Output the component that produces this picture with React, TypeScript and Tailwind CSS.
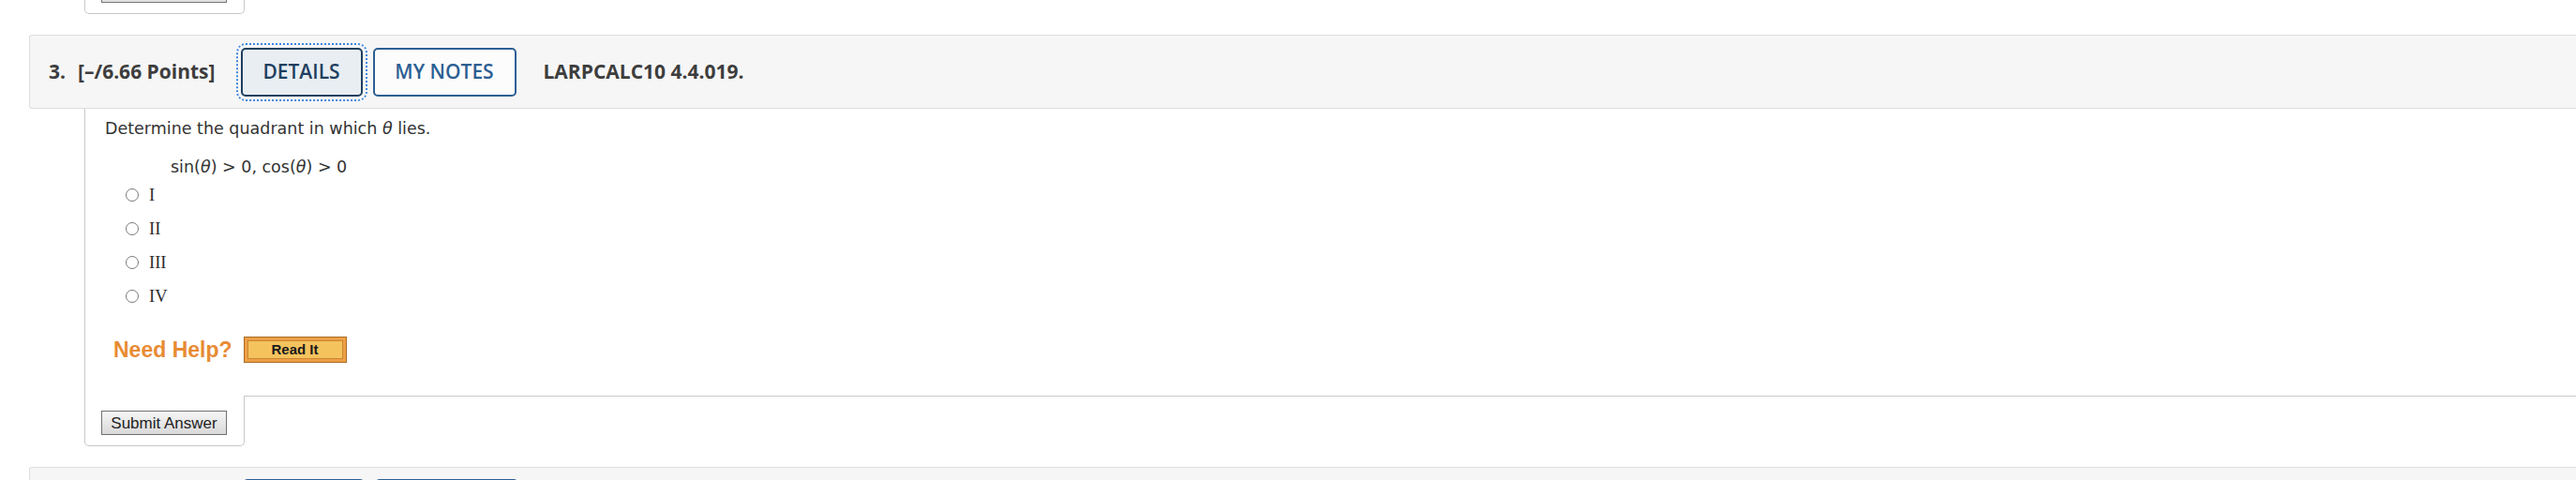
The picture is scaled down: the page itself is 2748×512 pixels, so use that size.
export default function App() {
  const choices = ['I', 'II', 'III', 'IV']

  return (
    <div className="w-full h-[512px] overflow-hidden bg-white flex flex-col">
      {/* previous question's submit tab */}
      <div className="ml-[90px] w-[171px] h-[15px] shrink-0 border-x border-b border-[#c8c8c8] rounded-b-[5px] pl-[17px]">
        <div className="w-[134px] h-[3px] border-x border-b border-[#777] bg-[#e0e0e0]" />
      </div>

      <div className="mt-[22px] ml-[31px] h-[79px] shrink-0 border border-r-0 border-[#dedede] bg-[#f6f6f6] rounded-l-[3px] flex items-center pl-[20px] font-['Open_Sans',sans-serif] text-[21px] text-[#3d3d3d]">
        <span className="font-bold">3.</span>
        <span className="ml-[13px] font-bold">[–/6.66 Points]</span>
        <button className="ml-[27px] w-[130px] h-[52px] border-2 border-[#1f3f5f] rounded-[5px] bg-[#e8eef2] text-[#1f3f5f] font-semibold outline-2 outline-dotted outline-offset-[3px] outline-[#3d86e0]">
          DETAILS
        </button>
        <button className="ml-[11px] w-[153px] h-[52px] border-2 border-[#2c5f93] rounded-[5px] bg-[#fcfcfc] text-[#2c5f93] font-semibold">
          MY NOTES
        </button>
        <span className="ml-[29px] font-bold">LARPCALC10 4.4.019.</span>
      </div>

      <div className="ml-[90px] h-[306px] shrink-0 border-l border-[#c8c8c8] pl-[21px] pt-[11px] text-[#333]">
        <p className="h-[20px] leading-[20px] text-[17.5px] font-['DejaVu_Sans',Verdana,sans-serif]">
          Determine the quadrant in which <i>θ</i> lies.
        </p>
        <p className="mt-[21px] ml-[70px] h-[20px] leading-[20px] text-[17.5px] font-['DejaVu_Sans',Verdana,sans-serif]">
          sin(<i>θ</i>) &gt; 0, cos(<i>θ</i>) &gt; 0
        </p>
        <div className="mt-[2px]">
          {choices.map((c) => (
            <div key={c} className="h-[36px] flex items-center pl-[22px]">
              <span className="w-[14px] h-[14px] rounded-full border border-[#7a7a7a] bg-white" />
              <span className="ml-[11px] text-[18.5px] leading-none text-[#2e2e2e] font-['Liberation_Serif',serif]">{c}</span>
            </div>
          ))}
        </div>
        <div className="mt-[25px] h-[28px] flex items-center pl-[9px]">
          <span className="text-[23px] font-bold text-[#e88b34] font-['Liberation_Sans',Arial,sans-serif]">Need Help?</span>
          <div className="ml-[12px] w-[110px] h-[28px] border border-[#a96c27] bg-[#ee9f45] p-[3px]">
            <div className="h-full border border-[#c98630] bg-[#f5c35e] flex items-center justify-center text-[15px] font-bold text-[#1a1a1a] font-['Liberation_Sans',Arial,sans-serif]">
              Read It
            </div>
          </div>
        </div>
      </div>

      <div className="ml-[90px] h-[54px] shrink-0 flex">
        <div className="w-[171px] border-l border-r border-b border-[#c8c8c8] rounded-b-[5px] pt-[16px] pl-[17px]">
          <button className="w-[134px] h-[26px] border border-[#707070] bg-gradient-to-b from-[#f6f6f6] to-[#d9d9d9] text-[17px] leading-none text-[#222] font-['Liberation_Sans',Arial,sans-serif]">
            Submit Answer
          </button>
        </div>
        <div className="flex-1 border-t border-[#c8c8c8]" />
      </div>

      {/* next question's header, mostly below the fold */}
      <div className="mt-[22px] ml-[31px] h-[79px] shrink-0 border border-r-0 border-[#dedede] bg-[#f6f6f6] rounded-l-[3px] flex items-start pt-[12px] pl-[227px]">
        <div className="w-[130px] h-[52px] border-2 border-[#2c5f93] rounded-[5px] bg-[#fcfcfc]" />
        <div className="ml-[11px] w-[153px] h-[52px] border-2 border-[#2c5f93] rounded-[5px] bg-[#fcfcfc]" />
      </div>
    </div>
  )
}
